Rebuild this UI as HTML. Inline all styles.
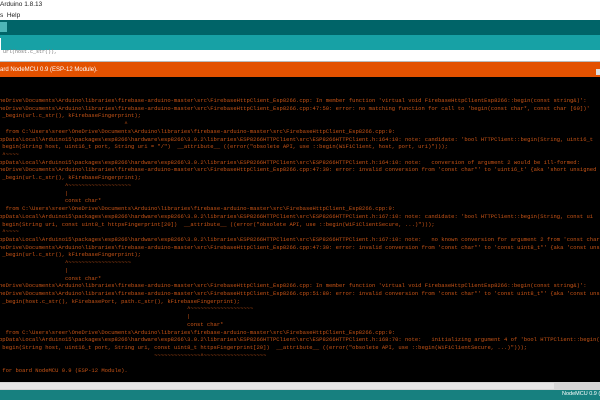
<!DOCTYPE html>
<html><head><meta charset="utf-8"><style>
*{margin:0;padding:0}
html,body{width:600px;height:400px;overflow:hidden}
body{background:#000;position:relative;font-family:"Liberation Sans",sans-serif}
.a{position:absolute;left:0;width:600px}
pre{position:absolute;left:-1px;top:97px;width:601px;height:285px;overflow:hidden;font-family:"Liberation Mono",monospace;font-size:5.5px;line-height:7.72px;color:#c85416;white-space:pre}
</style></head><body>
<div class="a" style="top:0;height:20px;background:#fff"></div>
<div style="position:absolute;left:0;top:1px;font-size:6.5px;color:#222">Arduino 1.8.13</div>
<div style="position:absolute;left:0;top:12px;font-size:6.5px;color:#222">s&nbsp; Help</div>
<div class="a" style="top:20px;height:15px;background:#006468"></div>
<div style="position:absolute;left:0;top:22px;width:7px;height:10px;background:#4db6b8"></div>
<div class="a" style="top:35px;height:15px;background:#17a1a5"></div>
<div style="position:absolute;left:0;top:38px;width:1px;height:12px;background:#fff"></div>
<div class="a" style="top:50px;height:11px;background:#fff"></div>
<div style="position:absolute;left:0;top:49px;font-family:'Liberation Mono',monospace;font-size:5px;color:#777">&nbsp;url(host.c_str()),</div>
<div class="a" style="top:61px;height:1px;background:#bbb"></div>
<div class="a" style="top:62px;height:15px;background:#e35100"></div>
<div style="position:absolute;left:0;top:67px;font-size:6px;color:#fff">ard NodeMCU 0.9 (ESP-12 Module).</div>
<div style="position:absolute;left:596px;top:69px;width:4px;height:6px;background:#ddd"></div>
<pre>neDrive\Documents\Arduino\libraries\firebase-arduino-master\src\FirebaseHttpClient_Esp8266.cpp: In member function 'virtual void FirebaseHttpClientEsp8266::begin(const string&amp;)':
neDrive\Documents\Arduino\libraries\firebase-arduino-master\src\FirebaseHttpClient_Esp8266.cpp:47:50: error: no matching function for call to 'begin(const char*, const char [60])'
 _begin(url.c_str(), kFirebaseFingerprint);
                                      ^
  from C:\Users\sreer\OneDrive\Documents\Arduino\libraries\firebase-arduino-master\src\FirebaseHttpClient_Esp8266.cpp:9:
ppData\Local\Arduino15\packages\esp8266\hardware\esp8266\3.0.2\libraries\ESP8266HTTPClient\src\ESP8266HTTPClient.h:164:10: note: candidate: 'bool HTTPClient::begin(String, uint16_t
 begin(String host, uint16_t port, String uri = "/")  __attribute__ ((error("obsolete API, use ::begin(WiFiClient, host, port, uri)")));
 ^~~~~
ppData\Local\Arduino15\packages\esp8266\hardware\esp8266\3.0.2\libraries\ESP8266HTTPClient\src\ESP8266HTTPClient.h:164:10: note:   conversion of argument 2 would be ill-formed:
neDrive\Documents\Arduino\libraries\firebase-arduino-master\src\FirebaseHttpClient_Esp8266.cpp:47:30: error: invalid conversion from 'const char*' to 'uint16_t' {aka 'short unsigned
 _begin(url.c_str(), kFirebaseFingerprint);
                    ^~~~~~~~~~~~~~~~~~~~
                    |
                    const char*
  from C:\Users\sreer\OneDrive\Documents\Arduino\libraries\firebase-arduino-master\src\FirebaseHttpClient_Esp8266.cpp:9:
ppData\Local\Arduino15\packages\esp8266\hardware\esp8266\3.0.2\libraries\ESP8266HTTPClient\src\ESP8266HTTPClient.h:167:10: note: candidate: 'bool HTTPClient::begin(String, const ui
 begin(String uri, const uint8_t httpsFingerprint[20])  __attribute__ ((error("obsolete API, use ::begin(WiFiClientSecure, ...)")));
 ^~~~~
ppData\Local\Arduino15\packages\esp8266\hardware\esp8266\3.0.2\libraries\ESP8266HTTPClient\src\ESP8266HTTPClient.h:167:10: note:   no known conversion for argument 2 from 'const char*' to 'const uint8_t*' {aka 'const un
neDrive\Documents\Arduino\libraries\firebase-arduino-master\src\FirebaseHttpClient_Esp8266.cpp:47:30: error: invalid conversion from 'const char*' to 'const uint8_t*' {aka 'const unsi
 _begin(url.c_str(), kFirebaseFingerprint);
                    ^~~~~~~~~~~~~~~~~~~~
                    |
                    const char*
neDrive\Documents\Arduino\libraries\firebase-arduino-master\src\FirebaseHttpClient_Esp8266.cpp: In member function 'virtual void FirebaseHttpClientEsp8266::begin(const string&amp;)':
neDrive\Documents\Arduino\libraries\firebase-arduino-master\src\FirebaseHttpClient_Esp8266.cpp:51:80: error: invalid conversion from 'const char*' to 'const uint8_t*' {aka 'const unsi
 _begin(host.c_str(), kFirebasePort, path.c_str(), kFirebaseFingerprint);
                                                         ^~~~~~~~~~~~~~~~~~~~
                                                         |
                                                         const char*
  from C:\Users\sreer\OneDrive\Documents\Arduino\libraries\firebase-arduino-master\src\FirebaseHttpClient_Esp8266.cpp:9:
ppData\Local\Arduino15\packages\esp8266\hardware\esp8266\3.0.2\libraries\ESP8266HTTPClient\src\ESP8266HTTPClient.h:168:70: note:   initializing argument 4 of 'bool HTTPClient::begin(
 begin(String host, uint16_t port, String uri, const uint8_t httpsFingerprint[20])  __attribute__ ((error("obsolete API, use ::begin(WiFiClientSecure, ...)")));
                                               ~~~~~~~~~~~~~~^~~~~~~~~~~~~~~~~~~~

 for board NodeMCU 0.9 (ESP-12 Module).</pre>
<div class="a" style="top:382px;height:8px;background:#d6d6d6"></div>
<div style="position:absolute;left:0;top:383px;width:554px;height:6px;background:#e6e6e6"></div>
<div class="a" style="top:390px;height:10px;background:#17807f"></div>
<div style="position:absolute;left:562px;top:391px;font-size:5.5px;color:#fff;white-space:nowrap">NodeMCU 0.9 (ESP-12 Module)</div>
</body></html>
